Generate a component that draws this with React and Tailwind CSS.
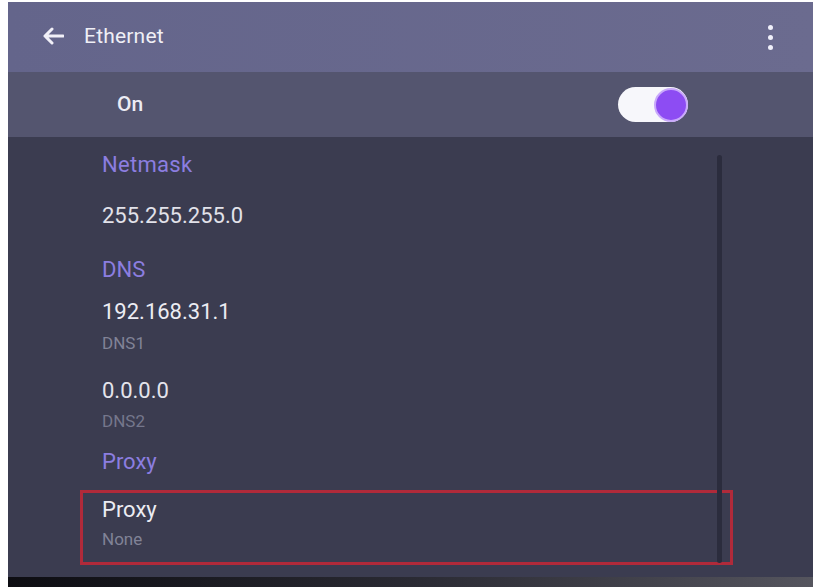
import React from "react";

export default function App() {
  return (
    <div
      className="w-[820px] h-[587px] bg-white flex flex-col pl-[8px] pr-[7px] pt-[2px] overflow-hidden"
      style={{ fontFamily: "Roboto, 'Noto Sans', sans-serif" }}
    >
      <div className="flex-1 flex flex-col">
        {/* Header */}
        <div className="h-[70px] bg-gradient-to-r from-[#64658b] to-[#6b6b8f] flex items-center pl-[34px] pr-[40px]">
          <svg width="22" height="18" viewBox="0 0 22 18" className="mt-[-2px]">
            <path d="M21 9H3M10 2L3 9l7 7" stroke="#f1f0f8" strokeWidth="3" fill="none" strokeLinecap="round" strokeLinejoin="round" />
          </svg>
          <span className="ml-[20px] text-[21px] text-[#efeff6] tracking-[0.2px]">Ethernet</span>
          <div className="ml-auto flex flex-col items-center gap-[5px] pt-[1px]">
            <span className="w-[5px] h-[5px] rounded-full bg-[#f0f0fa]" />
            <span className="w-[5px] h-[5px] rounded-full bg-[#f0f0fa]" />
            <span className="w-[5px] h-[5px] rounded-full bg-[#f0f0fa]" />
          </div>
        </div>

        {/* On row */}
        <div className="h-[65px] bg-[#54556f] flex items-center pl-[109px]">
          <span className="text-[21px] text-[#ececf4] font-medium">On</span>
          <div className="ml-[475px] w-[70px] h-[35px] rounded-full bg-[#f7f7fb] flex items-center justify-end pr-[0px]">
            <div className="w-[34px] h-[34px] rounded-full bg-[#8d4cf3] border-2 border-[#c9a9fb]" />
          </div>
        </div>

        {/* Main list */}
        <div className="relative h-[440px] bg-[#3b3c50] flex flex-col">
          <div className="h-[54px] flex items-center pl-[94px]">
            <span className="text-[22px] text-[#8c7ee0] tracking-[0.3px]">Netmask</span>
          </div>
          <div className="h-[49px] flex items-center pl-[94px]">
            <span className="text-[22px] text-[#e2e2ea]">255.255.255.0</span>
          </div>
          <div className="h-[58px] flex items-center pl-[94px]">
            <span className="text-[22px] text-[#8c7ee0]">DNS</span>
          </div>
          <div className="flex flex-col pl-[94px]">
            <span className="h-[28px] leading-[28px] text-[22px] text-[#ececf3]">192.168.31.1</span>
            <span className="mt-[7px] h-[20px] leading-[20px] text-[17px] text-[#818397]">DNS1</span>
            <span className="mt-[24px] h-[28px] leading-[28px] text-[22px] text-[#e4e4ec]">0.0.0.0</span>
            <span className="mt-[6px] h-[20px] leading-[20px] text-[17px] text-[#75778c]">DNS2</span>
            <span className="mt-[17px] h-[28px] leading-[28px] text-[22px] text-[#8c7ee0]">Proxy</span>
          </div>
          <div className="mt-[14px] ml-[72px] w-[653px] h-[75px] border-[3px] border-[#b02a3a] flex flex-col pl-[19px] pt-[3px]">
            <span className="h-[28px] leading-[28px] text-[22px] text-[#ececf3]">Proxy</span>
            <span className="mt-[5px] h-[20px] leading-[20px] text-[17px] text-[#818397]">None</span>
          </div>

          {/* scrollbar */}
          <div className="absolute left-[709px] top-[18px] w-[5px] h-[408px] bg-[#2b2c3d] rounded-full" />
        </div>

        {/* bottom bezel */}
        <div className="flex-1 bg-gradient-to-r from-[#0d0d12] via-[#2a2a33] to-[#55555e]" />
      </div>
    </div>
  );
}
